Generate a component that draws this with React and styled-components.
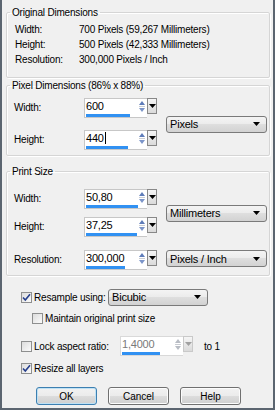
import React from 'react';
import styled, { createGlobalStyle } from 'styled-components';

const GlobalStyle = createGlobalStyle`
  body {
    margin: 0;
    background: #f0f0f0;
  }
`;

const Dialog = styled.div`
  width: 275px;
  height: 410px;
  box-sizing: border-box;
  border: 2px solid #5b6570;
  border-top: none;
  padding: 0 2px 0 4px;
  background: #f0f0f0;
  display: flex;
  flex-direction: column;
  font-family: "Liberation Sans", Arial, sans-serif;
  font-size: 10px;
  letter-spacing: -0.2px;
  color: #000;
`;

const Group = styled.fieldset`
  margin: ${p => p.$mt}px 1px 0 0;
  padding: ${p => p.$pad};
  min-width: 0;
  border: 1px solid #d5d5d5;
  border-radius: 2px;
  box-shadow: inset 1px 1px 0 #fff, 1px 1px 0 #fff;
`;

const Legend = styled.legend`
  margin-left: -4px;
  padding: 0 2px;
  line-height: 13px;
  height: 13px;
`;

const InfoRow = styled.div`
  display: grid;
  grid-template-columns: 64px 1fr;
  height: 15px;
  line-height: 15px;
  padding-left: 1px;
`;

const FieldGrid = styled.div`
  display: grid;
  grid-template-columns: 61px 73px 1fr;
  grid-template-rows: ${p => p.$rows};
  column-gap: 9px;
  row-gap: ${p => p.$gap}px;
  align-items: center;
`;

const Label = styled.div`
  grid-column: 1;
  align-self: ${p => (p.$end ? 'end' : 'center')};
  line-height: 20px;
`;

const SpinWrap = styled.div`
  grid-column: 2;
  flex: none;
  display: flex;
  align-items: flex-start;
  height: 20px;
  align-self: ${p => (p.$end ? 'end' : 'center')};
`;

const Field = styled.div`
  width: 63px;
  height: 20px;
  box-sizing: border-box;
  background: #fff;
  border: 1px solid ${p => (p.$disabled ? '#d9d9d9' : '#c7c7c7')};
  border-right: none;
  display: flex;
  flex-direction: column;
`;

const FieldTop = styled.div`
  display: flex;
  justify-content: space-between;
  height: 15px;
`;

const FieldText = styled.span`
  padding: 1px 0 0 1px;
  line-height: 13px;
  font-size: 11px;
  color: ${p => (p.$disabled ? '#7a7a7a' : '#000')};
`;

const Caret = styled.span`
  display: inline-block;
  width: 1px;
  height: 12px;
  margin-left: 1px;
  vertical-align: -2px;
  background: #000;
`;

const Bar = styled.div`
  height: 3px;
  margin: 0 0 0 1px;
  background: #3191f2;
`;

const DropBtn = styled.div`
  width: 10px;
  height: 16px;
  box-sizing: border-box;
  border: 1px solid ${p => (p.$disabled ? '#c9c9c9' : '#888')};
  background: linear-gradient(#f6f6f6, #dadada);
  display: flex;
  justify-content: center;
  padding-top: 5px;
`;

const Select = styled.div`
  grid-column: 3;
  grid-row: ${p => p.$row || 'auto'};
  flex: none;
  width: ${p => (p.$w ? `${p.$w}px` : 'auto')};
  height: 17px;
  box-sizing: border-box;
  border: 1px solid #7a7a7a;
  border-radius: 3px;
  background: linear-gradient(#f4f4f4 0%, #ebebeb 50%, #dedede 50%, #d2d2d2 100%);
  display: flex;
  align-items: center;
  justify-content: space-between;
  padding: 0 6px 0 3px;
  font-size: 11px;
  align-self: ${p => (p.$end ? 'end' : 'center')};
  margin-bottom: ${p => (p.$end ? 3 : 0)}px;
`;

const OptionRow = styled.div`
  display: flex;
  align-items: center;
  height: ${p => p.$h}px;
  margin-top: ${p => p.$mt}px;
  padding-left: ${p => p.$indent}px;
`;

const Check = styled.label`
  flex: none;
  display: flex;
  align-items: center;
  gap: 2px;
  white-space: nowrap;
  width: ${p => (p.$w ? `${p.$w}px` : 'auto')};
`;

const Box = styled.span`
  width: 11px;
  height: 11px;
  box-sizing: border-box;
  border: 1px solid #8e8f8f;
  background: linear-gradient(135deg, #dcdcdc, #fbfbfb);
  display: flex;
  align-items: center;
  justify-content: center;
`;

const Suffix = styled.span`
  margin-left: 11px;
`;

const ButtonRow = styled.div`
  display: flex;
  gap: 11px;
  margin-top: 12px;
  padding-left: 30px;
`;

const Button = styled.button`
  width: 61px;
  height: 18px;
  padding: 0;
  font: inherit;
  color: #000;
  border: 1px solid ${p => (p.$default ? '#3c7fb1' : '#707070')};
  border-radius: 3px;
  background: linear-gradient(#f2f2f2 0%, #ebebeb 50%, #dddddd 50%, #cfcfcf 100%);
  box-shadow: ${p => (p.$default ? 'inset 0 0 0 1px #bfe1f4' : 'inset 0 0 0 1px #fcfcfc')};
`;

const DownArrow = ({ color = '#000' }) => (
  <svg width="7" height="4" viewBox="0 0 7 4">
    <path d="M0 0h7L3.5 4z" fill={color} />
  </svg>
);

const SpinArrows = ({ disabled }) => (
  <svg width="10" height="14" viewBox="0 0 10 14">
    <path d="M5 2L8 6H2z" fill={disabled ? '#b8bcc4' : '#5e7cb9'} />
    <path d="M2 7.5h6" stroke="#c9ccd2" strokeWidth="1" />
    <path d="M5 13L8 9H2z" fill={disabled ? '#b8bcc4' : '#7c95c9'} />
  </svg>
);

const Tick = () => (
  <svg width="9" height="9" viewBox="0 0 9 9">
    <path d="M1 4.5l2.3 2.5L8 1.2" fill="none" stroke="#263f8c" strokeWidth="1.6" />
  </svg>
);

const Spin = ({ value, fill, caret, disabled, end }) => (
  <SpinWrap $end={end}>
    <Field $disabled={disabled}>
      <FieldTop>
        <FieldText $disabled={disabled}>
          {value}
          {caret && <Caret />}
        </FieldText>
        <SpinArrows disabled={disabled} />
      </FieldTop>
      <Bar style={{ width: fill }} />
    </Field>
    <DropBtn $disabled={disabled}>
      <DownArrow color={disabled ? '#a0a0a0' : '#000'} />
    </DropBtn>
  </SpinWrap>
);

const CheckBox = ({ checked, label, w }) => (
  <Check $w={w}>
    <Box>{checked && <Tick />}</Box>
    <span>{label}</span>
  </Check>
);

const info = [
  ['Width:', '700 Pixels (59,267 Millimeters)'],
  ['Height:', '500 Pixels (42,333 Millimeters)'],
  ['Resolution:', '300,000 Pixels / Inch'],
];

export default function App() {
  return (
    <Dialog>
      <GlobalStyle />
      <Group $mt={6} $pad="3px 7px 10px">
        <Legend>Original Dimensions</Legend>
        {info.map(([k, v]) => (
          <InfoRow key={k}>
            <span>{k}</span>
            <span>{v}</span>
          </InfoRow>
        ))}
      </Group>

      <Group $mt={1} $pad="6px 2px 5px 7px">
        <Legend>Pixel Dimensions (86% x 88%)</Legend>
        <FieldGrid $rows="20px 20px" $gap={12}>
          <Label>Width:</Label>
          <Spin value="600" fill={44} />
          <Select $row="1 / span 2">
            <span>Pixels</span>
            <DownArrow />
          </Select>
          <Label>Height:</Label>
          <Spin value="440" fill={42} caret />
        </FieldGrid>
      </Group>

      <Group $mt={9} $pad="11px 2px 5px 7px">
        <Legend>Print Size</Legend>
        <FieldGrid $rows="20px 20px 25px" $gap={8}>
          <Label>Width:</Label>
          <Spin value="50,80" fill={52} />
          <Select $row="1 / span 2">
            <span>Millimeters</span>
            <DownArrow />
          </Select>
          <Label>Height:</Label>
          <Spin value="37,25" fill={51} />
          <Label $end>Resolution:</Label>
          <Spin value="300,000" fill={39} end />
          <Select $row="3" $end>
            <span>Pixels / Inch</span>
            <DownArrow />
          </Select>
        </FieldGrid>
      </Group>

      <OptionRow $h={18} $mt={12} $indent={15}>
        <CheckBox checked label="Resample using:" w={87} />
        <Select $w={100}>
          <span>Bicubic</span>
          <DownArrow />
        </Select>
      </OptionRow>
      <OptionRow $h={14} $mt={5} $indent={26}>
        <CheckBox label="Maintain original print size" />
      </OptionRow>
      <OptionRow $h={20} $mt={11} $indent={15}>
        <CheckBox label="Lock aspect ratio:" w={99} />
        <Spin value="1,4000" fill={38} disabled />
        <Suffix>to 1</Suffix>
      </OptionRow>
      <OptionRow $h={14} $mt={5} $indent={15}>
        <CheckBox checked label="Resize all layers" />
      </OptionRow>

      <ButtonRow>
        <Button $default>OK</Button>
        <Button>Cancel</Button>
        <Button>Help</Button>
      </ButtonRow>
    </Dialog>
  );
}
